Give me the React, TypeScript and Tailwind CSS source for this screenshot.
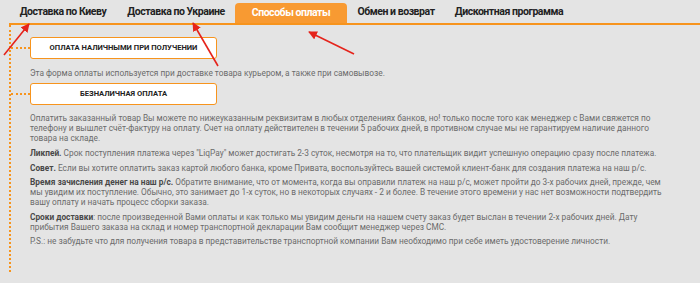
import React from "react";

function Tab({ label, w, active }: { label: string; w: string; active?: boolean }) {
  return (
    <div
      className={`${w} flex items-center justify-center whitespace-nowrap font-bold text-[10.5px] tracking-[-0.45px] ${
        active ? "h-[20px] rounded-t-[4px] bg-[#f89a32] text-white" : "h-[23px] text-[#222]"
      }`}
    >
      {label}
    </div>
  );
}

function ButtonRow({ label }: { label: string }) {
  return (
    <div className="flex items-center">
      <div className="w-[19px] border-t-2 border-dotted border-[#f7941d]" />
      <div className="w-[187px] h-[22px] flex items-center justify-center rounded-[3px] border-[1.5px] border-[#f7941d] bg-white text-[7.6px] font-bold text-[#222] whitespace-nowrap">
        {label}
      </div>
    </div>
  );
}

export default function App() {
  return (
    <div className="relative w-[700px] h-[283px] overflow-hidden bg-[#e4e4e4] font-['Roboto',sans-serif]">
      <div className="flex items-end h-[23px] pl-[9px]">
        <Tab label="Доставка по Киеву" w="w-[108px]" />
        <Tab label="Доставка по Украине" w="w-[118px]" />
        <Tab label="Способы оплаты" w="w-[112px]" active />
        <Tab label="Обмен и возврат" w="w-[98px]" />
        <Tab label="Дисконтная программа" w="w-[128px]" />
      </div>
      <div className="ml-[9px] h-[2px] bg-[#f7941d]" />
      <div className="ml-[9px] h-[247px] border-l-2 border-dotted border-[#f7941d] pt-[12px]">
        <ButtonRow label="ОПЛАТА НАЛИЧНЫМИ ПРИ ПОЛУЧЕНИИ" />
        <div className="pl-[19px] mt-[8px] h-[12px] leading-[12px] text-[8.3px] text-[#6b6b6b] whitespace-nowrap">
          Эта форма оплаты используется при доставке товара курьером, а также при самовывозе.
        </div>
        <div className="mt-[4px]">
          <ButtonRow label="БЕЗНАЛИЧНАЯ ОПЛАТА" />
        </div>
        <div className="pl-[19px] text-[8.3px] leading-[10px] text-[#6b6b6b] whitespace-nowrap">
          <p className="mt-[7.5px]">
            Оплатить заказанный товар Вы можете по нижеуказанным реквизитам в любых отделениях банков, но! только после того как менеджер с Вами свяжется по
            <br />
            телефону и вышлет счёт-фактуру на оплату. Счет на оплату действителен в течении 5 рабочих дней, в противном случае мы не гарантируем наличие данного
            <br />
            товара на складе.
          </p>
          <p className="mt-[5px]">
            <b className="text-[#484848]">Ликпей.</b> Срок поступления платежа через "LiqPay" может достигать 2-3 суток, несмотря на то, что плательщик видит успешную операцию сразу после платежа.
          </p>
          <p className="mt-[5px]">
            <b className="text-[#484848]">Совет.</b> Если вы хотите оплатить заказ картой любого банка, кроме Привата, воспользуйтесь вашей системой клиент-банк для создания платежа на наш р/с.
          </p>
          <p className="mt-[4.5px]">
            <b className="text-[#484848]">Время зачисления денег на наш р/с.</b> Обратите внимание, что от момента, когда вы оправили платеж на наш р/с, может пройти до 3-х рабочих дней, прежде, чем
            <br />
            мы увидим их поступление. Обычно, это занимает до 1-х суток, но в некоторых случаях - 2 и более. В течение этого времени у нас нет возможности подтвердить
            <br />
            вашу оплату и начать процесс сборки заказа.
          </p>
          <p className="mt-[4.5px]">
            <b className="text-[#484848]">Сроки доставки</b>: после произведенной Вами оплаты и как только мы увидим деньги на нашем счету заказ будет выслан в течении 2-х рабочих дней. Дату
            <br />
            прибытия Вашего заказа на склад и номер транспортной декларации Вам сообщит менеджер через СМС.
          </p>
          <p className="mt-[4px]">
            P.S.: не забудьте что для получения товара в представительстве транспортной компании Вам необходимо при себе иметь удостоверение личности.
          </p>
        </div>
      </div>

      <svg className="pointer-events-none absolute left-0 top-0" width="700" height="283" viewBox="0 0 700 283">
        <defs>
          <marker id="ah" viewBox="0 0 10 10" refX="9" refY="5" markerWidth="5.5" markerHeight="5.5" orient="auto">
            <path d="M0 0 L10 5 L0 10 z" fill="#e5231b" />
          </marker>
        </defs>
        <line x1="4" y1="55" x2="29" y2="24" stroke="#e5231b" strokeWidth="1.6" markerEnd="url(#ah)" />
        <line x1="218" y1="66" x2="193" y2="23" stroke="#e5231b" strokeWidth="1.6" markerEnd="url(#ah)" />
        <line x1="354" y1="54" x2="309" y2="32" stroke="#e5231b" strokeWidth="1.6" markerEnd="url(#ah)" />
      </svg>
    </div>
  );
}
